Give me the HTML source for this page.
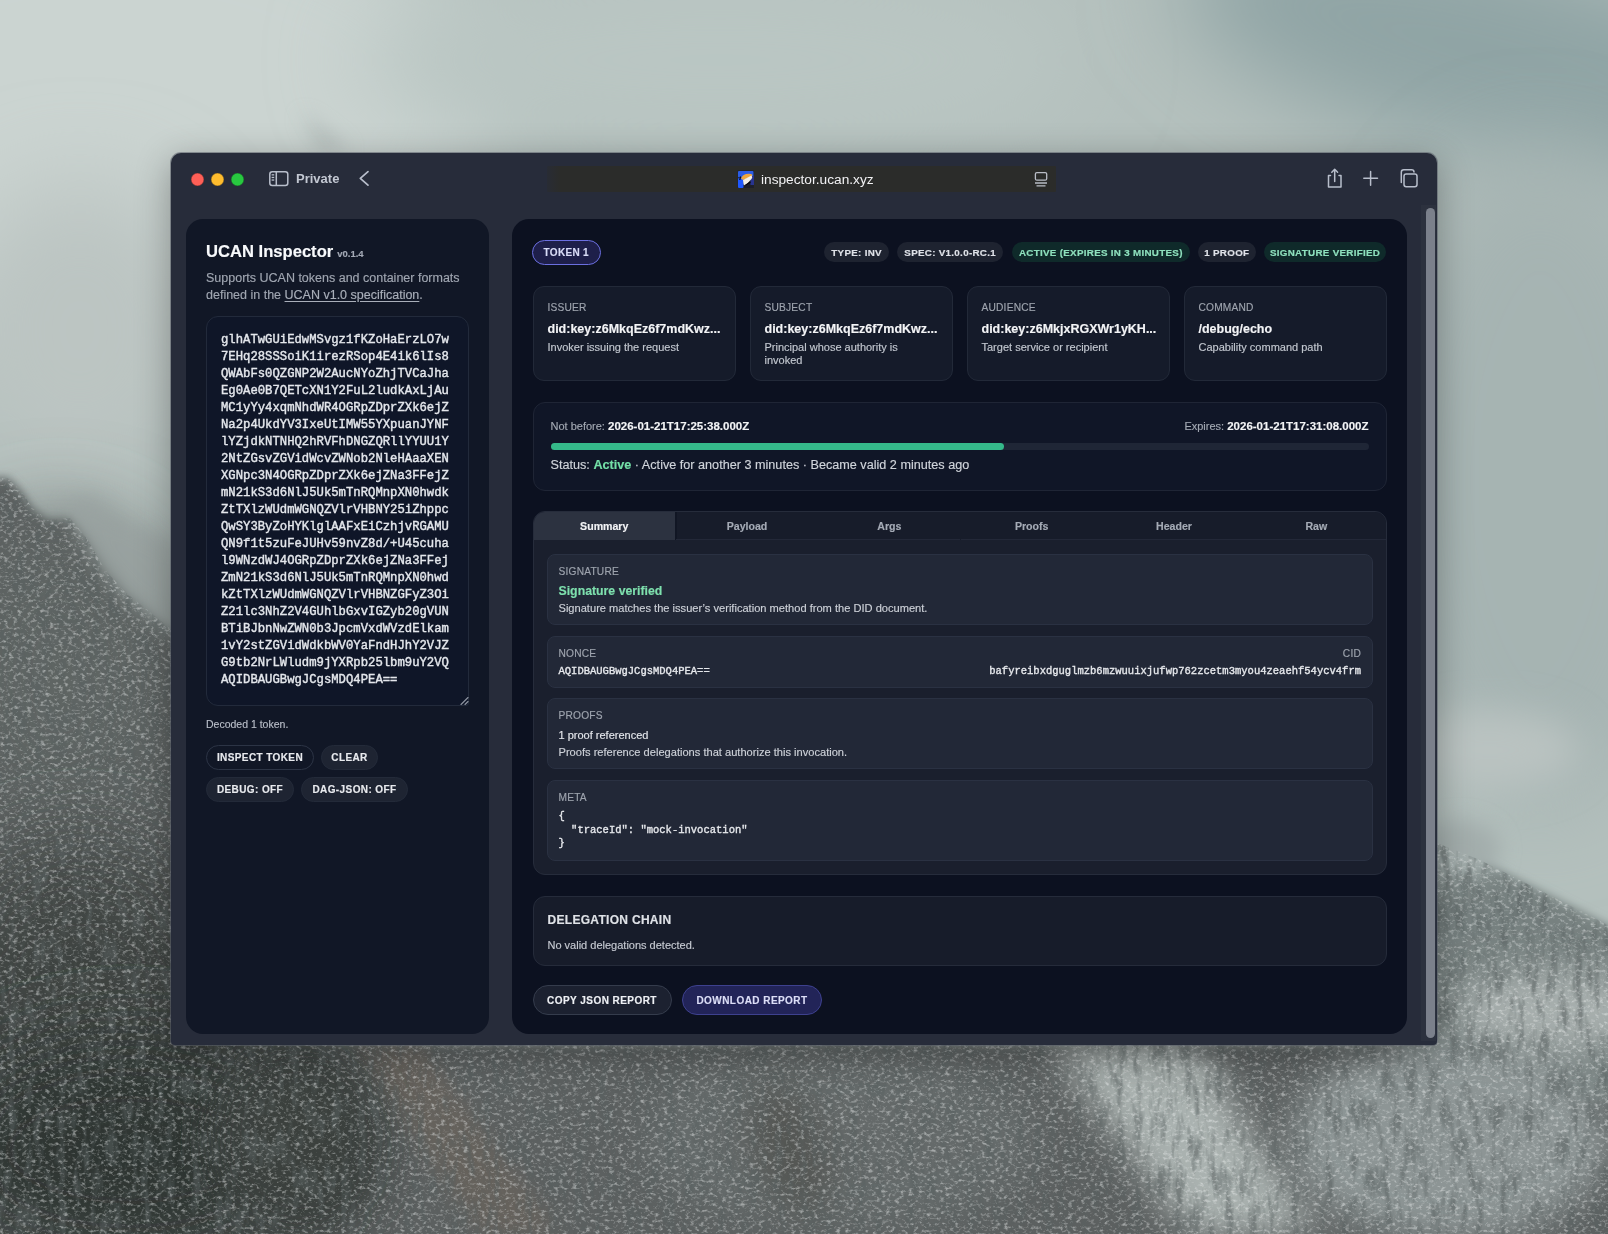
<!DOCTYPE html>
<html><head><meta charset="utf-8">
<style>
*{box-sizing:border-box;margin:0;padding:0}
html,body{width:1608px;height:1234px;overflow:hidden}
body{position:relative;font-family:"Liberation Sans",sans-serif;background:#b9c2c0;color:#e5e7eb}
#lp,#rp{-webkit-text-stroke:.15px currentColor;will-change:transform}
.tt{will-change:transform}
.abs{position:absolute}
#bg{position:absolute;left:0;top:0;width:1608px;height:1234px}
#win{position:absolute;left:171px;top:153px;width:1266px;height:892px;background:#272c3a;border-radius:10px 10px 4px 4px;box-shadow:0 0 0 1px rgba(90,95,105,.55),0 8px 36px rgba(0,0,0,.32)}
.tl{position:absolute;top:172.5px;width:13px;height:13px;border-radius:50%;box-shadow:inset 0 0 0 .6px rgba(0,0,0,.35)}
#url{position:absolute;left:547px;top:165.5px;width:509px;height:26.5px;background:linear-gradient(90deg,rgba(43,44,42,.35),#2b2c2a 13px);border-radius:1px}
.panel{position:absolute;top:219px;height:815px;border-radius:17px}
#lp{left:186px;width:303px;background:#111726}
#rp{left:512px;width:895px;background:#0c1120}
#scroll{position:absolute;left:1421px;top:205px;width:15px;height:836px;background:#2c313e}
#thumb{position:absolute;left:1425.5px;top:208px;width:9px;height:830px;background:#7b808b;border-radius:5px}

.lbl{position:absolute;white-space:nowrap}
#lp .h1{position:absolute;left:20px;top:23px;font-size:16.6px;font-weight:bold;color:#f8fafc;line-height:20px;white-space:nowrap}
#lp .h1 small{font-size:9.5px;color:#a3a9b5;font-weight:bold;margin-left:4px}
#lp .sub{position:absolute;left:20px;top:51px;width:270px;font-size:12.5px;line-height:17px;color:#a0a6b1}
#lp .sub u{text-decoration:underline;text-underline-offset:2px;color:#a9afba}
#ta{position:absolute;left:20px;top:97px;width:263px;height:390px;border:1px solid #222a3b;border-radius:12px 12px 3px 12px;background:#0f1628}
#ta pre{position:absolute;left:14px;top:15px;-webkit-text-stroke:.4px #e4e7ec;font-family:"Liberation Mono",monospace;font-size:12.25px;line-height:17px;color:#e4e7ec}
.btn{position:absolute;height:25px;border-radius:13px;font-size:10px;font-weight:bold;letter-spacing:.4px;color:#e8eaee;line-height:23px;text-align:center;white-space:nowrap}
.b1{border:1px solid #2c3445;background:#111726}
.b2{border:1px solid #232a39;background:#1e2432}

.pill{position:absolute;height:20.5px;border-radius:11px;font-size:9.8px;font-weight:bold;letter-spacing:.3px;line-height:22.5px;text-align:center;white-space:nowrap;top:22.7px}
.pg{background:#1e2330;color:#dfe2e8}
.pgr{background:#0f2a2a;color:#8ee0bd}
#tok{position:absolute;left:20px;top:21px;width:68.5px;height:25px;border:1.5px solid #6b6fe0;border-radius:13px;background:#1e1f4a;color:#d9dcf7;font-size:10px;font-weight:bold;letter-spacing:.3px;line-height:23.5px;text-align:center}
.card{position:absolute;top:66.5px;width:203px;height:95.4px;border:1px solid #222938;border-radius:11px;background:#151b2a}
.card .k{position:absolute;left:13.5px;top:14px;font-size:10.2px;letter-spacing:.2px;color:#9ea4ae;line-height:13px}
.card .v{position:absolute;left:13.5px;top:34px;font-size:12.5px;font-weight:bold;color:#f3f4f6;line-height:16px;white-space:nowrap}
.card .d{position:absolute;left:13.5px;top:54px;width:150px;font-size:11px;color:#c3c8d0;line-height:13px}
#val{position:absolute;left:20.5px;top:182.5px;width:854px;height:89.7px;border:1px solid #1f2535;border-radius:12px;background:#101627}
#tabs{position:absolute;left:20.5px;top:292.4px;width:854px;height:363.4px;border:1px solid #262c3b;border-radius:12px;background:#1a1f2d;overflow:hidden}
.tab{position:absolute;top:0;width:142.33px;height:27.5px;font-size:10.6px;font-weight:bold;color:#a5abb6;text-align:center;line-height:29px;box-shadow:inset 0 -1px 0 #232838}
.sec{position:absolute;left:13.5px;width:825.5px;border:1px solid #2a3142;border-radius:8px;background:#222837}
.sec .k{position:absolute;left:10.5px;top:10.3px;font-size:10.2px;letter-spacing:.2px;color:#9ea4ae;line-height:13px}
#del{position:absolute;left:20.5px;top:677.4px;width:854px;height:69.3px;border:1px solid #252b3a;border-radius:12px;background:#171c2a}
.rbtn{position:absolute;top:766px;height:30px;border-radius:15px;font-size:10px;font-weight:bold;letter-spacing:.45px;line-height:29.5px;text-align:center;color:#eef0f4}
.mono{font-family:"Liberation Mono",monospace;-webkit-text-stroke:.35px currentColor}
</style></head><body>
<svg id="bg" width="1608" height="1234" viewBox="0 0 1608 1234">
<defs>
<filter id="b1" x="-50%" y="-50%" width="200%" height="200%"><feGaussianBlur stdDeviation="18"/></filter>
<filter id="b2" x="-50%" y="-50%" width="200%" height="200%"><feGaussianBlur stdDeviation="45"/></filter>
<filter id="b3" x="-10%" y="-10%" width="120%" height="120%"><feGaussianBlur stdDeviation="5"/></filter>
<filter id="b4" x="-50%" y="-50%" width="200%" height="200%"><feGaussianBlur stdDeviation="10"/></filter>
<filter id="tex" x="0" y="0" width="1608" height="1234" filterUnits="userSpaceOnUse">
<feTurbulence type="fractalNoise" baseFrequency="0.22 0.3" numOctaves="3" seed="7"/>
<feColorMatrix type="matrix" values="0 0 0 0 0.88  0 0 0 0 0.9  0 0 0 0 0.9  3.2 0 0 0 -1.62"/>
</filter>
<filter id="texd" x="0" y="0" width="1608" height="1234" filterUnits="userSpaceOnUse">
<feTurbulence type="fractalNoise" baseFrequency="0.12 0.03" numOctaves="3" seed="11"/>
<feColorMatrix type="matrix" values="0 0 0 0 0.1  0 0 0 0 0.12  0 0 0 0 0.12  3.2 0 0 0 -1.45"/>
</filter>
<clipPath id="forest"><path d="M0 478 L8 478 L22 492 L32 508 L48 520 L70 518 L88 540 L105 570 L125 592 L150 612 L172 630 L172 1234 L0 1234Z M0 1044 H1608 V1234 H0Z M1437 843 L1480 860 L1608 925 V1044 H1437Z"/></clipPath>
</defs>
<rect width="1608" height="1234" fill="#b4c0bd"/>
<ellipse cx="120" cy="110" rx="380" ry="230" fill="#cbd4d1" filter="url(#b2)"/>
<ellipse cx="720" cy="60" rx="360" ry="100" fill="#bac6c3" filter="url(#b2)"/>
<ellipse cx="1500" cy="55" rx="330" ry="105" fill="#90a4a5" filter="url(#b2)" transform="rotate(14 1500 55)"/>
<ellipse cx="1540" cy="480" rx="170" ry="330" fill="#a6b4b2" filter="url(#b2)"/>
<ellipse cx="1490" cy="750" rx="90" ry="40" fill="#bac3c1" filter="url(#b1)"/>
<ellipse cx="80" cy="330" rx="130" ry="150" fill="#bcc5c2" filter="url(#b2)"/>
<path d="M300 112 L350 150 L320 150Z" fill="#9fa9a7" filter="url(#b4)" opacity=".6"/>
<g filter="url(#b3)">
<path d="M-60 478 L8 478 L22 492 L32 508 L48 520 L70 518 L88 540 L105 570 L125 592 L150 612 L172 630 L240 660 L240 1300 L-60 1300Z" fill="#5b6160"/>
<path d="M-60 1044 L1668 1044 L1668 1300 L-60 1300Z" fill="#5b6160"/>
<path d="M1400 840 L1480 860 L1608 925 L1680 950 L1680 1100 L1400 1100Z" fill="#778180"/>
</g>
<ellipse cx="60" cy="680" rx="120" ry="160" fill="#5f6564" filter="url(#b2)"/>
<ellipse cx="80" cy="1000" rx="150" ry="160" fill="#404543" filter="url(#b2)"/>
<ellipse cx="130" cy="1150" rx="200" ry="120" fill="#2f3432" filter="url(#b2)"/>
<path d="M350 1044 L420 1044 L560 1234 L480 1234Z" fill="#6a645c" filter="url(#b4)" opacity=".7"/>
<ellipse cx="300" cy="1140" rx="90" ry="100" fill="#3b3f3c" filter="url(#b1)"/>
<ellipse cx="840" cy="1140" rx="200" ry="90" fill="#656b6a" filter="url(#b1)"/>
<ellipse cx="790" cy="1150" rx="35" ry="70" fill="#4a4844" filter="url(#b1)" opacity=".6" transform="rotate(-20 790 1150)"/>
<path d="M1050 1044 L1190 1044 L1320 1234 L1190 1234Z" fill="#aab2b0" filter="url(#b1)"/>
<ellipse cx="1450" cy="1140" rx="160" ry="100" fill="#8d9595" filter="url(#b1)"/>
<path d="M1120 1044 L1240 1080 L1150 1100Z" fill="#a3aaa8" filter="url(#b4)"/>
<path d="M62 505 L92 495 L118 520 L148 532 L175 548 L175 640 L150 615 L125 595 L100 565 L80 530Z" fill="#9aa3a1" filter="url(#b4)" opacity=".9"/>
<ellipse cx="1560" cy="1010" rx="110" ry="40" fill="#a7afad" filter="url(#b1)"/>
<ellipse cx="1460" cy="850" rx="40" ry="30" fill="#a3adac" filter="url(#b4)"/>
<g clip-path="url(#forest)">
<rect width="1608" height="1234" filter="url(#texd)" opacity=".55"/>
<rect width="1608" height="1234" filter="url(#tex)" opacity=".45"/>
</g>
</svg>
<div id="win"></div>
<div class="tl" style="left:190.5px;background:#fe5f57"></div>
<div class="tl" style="left:210.5px;background:#febc2e"></div>
<div class="tl" style="left:230.5px;background:#28c840"></div>
<div id="url"></div>

<svg class="abs" style="left:0;top:0" width="1608" height="220" viewBox="0 0 1608 220">
<g fill="none" stroke="#b8becb" stroke-width="1.5" stroke-linecap="round" stroke-linejoin="round">
<rect x="269.8" y="171.8" width="18" height="13.6" rx="2.5"/>
<line x1="276.3" y1="172" x2="276.3" y2="185.2"/>
<path d="M368 171.6 L360.3 178.4 L368 185.2" stroke-width="1.7"/>
<path d="M1330.5 175.5 H1328.5 V187 H1341 V175.5 H1339"/>
<path d="M1334.7 181.5 V169.5 M1331.8 172.3 L1334.7 169.3 L1337.6 172.3"/>
<path d="M1370.6 171.5 V185.2 M1363.8 178.3 H1377.5"/>
<rect x="1404" y="174" width="13" height="12.8" rx="2.2"/>
<path d="M1401.3 182.5 V172.3 Q1401.3 169.8 1403.8 169.8 H1411.5 Q1414 169.8 1414 172"/>
</g>
<g fill="#b8becb"><rect x="271.6" y="174.2" width="2.6" height="1.3"/><rect x="271.6" y="176.8" width="2.6" height="1.3"/><rect x="271.6" y="179.4" width="2.6" height="1.3"/></g>
<g>
<rect x="737.8" y="170.5" width="16" height="17.5" fill="#1d1f2a"/>
<rect x="738" y="171" width="15.5" height="6.5" rx="1" fill="#2b5de8"/>
<rect x="738" y="178" width="5.5" height="10" rx="1" fill="#1f58ff"/>
<rect x="750.5" y="176" width="3.5" height="9" fill="#28348f"/>
<path d="M741 178.5 Q742 175 746 174 Q751 173 752.5 175 L751 177 Q747 178.5 743 180Z" fill="#eea53c"/>
<path d="M743 180 L751.5 175.5 Q753 177 751.5 179 L745.5 185.5 Q744 186 743.5 184Z" fill="#f3efe6"/>
<path d="M740.5 176.5 L739.8 180 M744.5 185.8 L750.5 182" stroke="#05060c" stroke-width="1.2"/>
</g>
<g fill="none" stroke="#b9bdc6" stroke-width="1.3">
<rect x="1035.4" y="172.6" width="11.3" height="7.6" rx="1.5"/>
<path d="M1035 183 H1047 M1036.5 185.8 H1045.5"/>
</g>
</svg>
<div class="abs tt" style="left:295.8px;top:171px;font-size:13px;font-weight:bold;color:#c3c8d2;line-height:16px">Private</div>
<div class="abs tt" style="left:761px;top:171.5px;font-size:13.7px;color:#f2f2f4;line-height:16px;letter-spacing:0">inspector.ucan.xyz</div>
<div id="lp" class="panel">
<div class="h1">UCAN Inspector<small>v0.1.4</small></div>
<div class="sub">Supports UCAN tokens and container formats defined in the <u>UCAN v1.0 specification</u>.</div>
<div id="ta"><pre>glhATwGUiEdwMSvgz1fKZoHaErzLO7w
7EHq28SSSoiK1irezRSop4E4ik6lIs8
QWAbFs0QZGNP2W2AucNYoZhjTVCaJha
Eg0Ae0B7QETcXN1Y2FuL2ludkAxLjAu
MC1yYy4xqmNhdWR4OGRpZDprZXk6ejZ
Na2p4UkdYV3IxeUtIMW55YXpuanJYNF
lYZjdkNTNHQ2hRVFhDNGZQRllYYUU1Y
2NtZGsvZGVidWcvZWNob2NleHAaaXEN
XGNpc3N4OGRpZDprZXk6ejZNa3FFejZ
mN21kS3d6NlJ5Uk5mTnRQMnpXN0hwdk
ZtTXlzWUdmWGNQZVlrVHBNY25iZhppc
QwSY3ByZoHYKlglAAFxEiCzhjvRGAMU
QN9f1t5zuFeJUHv59nvZ8d/+U45cuha
l9WNzdWJ4OGRpZDprZXk6ejZNa3FFej
ZmN21kS3d6NlJ5Uk5mTnRQMnpXN0hwd
kZtTXlzWUdmWGNQZVlrVHBNZGFyZ3Oi
Z21lc3NhZ2V4GUhlbGxvIGZyb20gVUN
BTiBJbnNwZWN0b3JpcmVxdWVzdElkam
1vY2stZGVidWdkbWV0YaFndHJhY2VJZ
G9tb2NrLWludm9jYXRpb25lbm9uY2VQ
AQIDBAUGBwgJCgsMDQ4PEA==</pre>
<svg class="abs" style="left:252px;top:378px" width="10" height="10"><path d="M2 9.5 L9 2.5 M6 9.5 L9 6.5" stroke="#8e94a0" stroke-width="1.1" stroke-linecap="round"/></svg>
</div>
<div class="lbl" style="left:20px;top:499px;font-size:10.5px;color:#b9bec8;line-height:13px">Decoded 1 token.</div>
<div class="btn b1" style="left:20px;top:526px;width:108px">INSPECT TOKEN</div>
<div class="btn b2" style="left:135px;top:526px;width:57px">CLEAR</div>
<div class="btn b2" style="left:20px;top:558px;width:88px">DEBUG: OFF</div>
<div class="btn b2" style="left:115px;top:558px;width:107px">DAG-JSON: OFF</div>
</div>
<div id="rp" class="panel">
<div id="tok">TOKEN 1</div>
<div class="pill pg" style="left:311.9px;width:65.5px">TYPE: INV</div>
<div class="pill pg" style="left:385.4px;width:105.5px">SPEC: V1.0.0-RC.1</div>
<div class="pill pgr" style="left:499.6px;width:178.5px">ACTIVE (EXPIRES IN 3 MINUTES)</div>
<div class="pill pg" style="left:685.6px;width:58.4px">1 PROOF</div>
<div class="pill pgr" style="left:751.9px;width:122.4px">SIGNATURE VERIFIED</div>
<div class="card" style="left:21px"><div class="k">ISSUER</div><div class="v">did:key:z6MkqEz6f7mdKwz...</div><div class="d">Invoker issuing the request</div></div>
<div class="card" style="left:238px"><div class="k">SUBJECT</div><div class="v">did:key:z6MkqEz6f7mdKwz...</div><div class="d">Principal whose authority is invoked</div></div>
<div class="card" style="left:455px"><div class="k">AUDIENCE</div><div class="v">did:key:z6MkjxRGXWr1yKH...</div><div class="d">Target service or recipient</div></div>
<div class="card" style="left:672px"><div class="k">COMMAND</div><div class="v">/debug/echo</div><div class="d">Capability command path</div></div>
<div id="val">
<div class="lbl" style="left:17px;top:16px;font-size:11px;color:#a3a9b3;line-height:14px">Not before: <b style="font-size:11.5px;color:#f3f4f6">2026-01-21T17:25:38.000Z</b></div>
<div class="lbl" style="right:17px;top:16px;font-size:11px;color:#a3a9b3;line-height:14px">Expires: <b style="font-size:11.5px;color:#f3f4f6">2026-01-21T17:31:08.000Z</b></div>
<div class="abs" style="left:17px;top:40px;width:818px;height:7.5px;border-radius:4px;background:#1f2636"></div>
<div class="abs" style="left:17px;top:40px;width:453px;height:7.5px;border-radius:4px;background:#35b98a"></div>
<div class="lbl" style="left:17px;top:54.5px;font-size:12.65px;color:#d0d4db;line-height:16px">Status: <span style="color:#74e0a8;font-weight:bold">Active</span> · Active for another 3 minutes · Became valid 2 minutes ago</div>
</div>
<div id="tabs">
<div class="abs" style="left:0;top:0;width:854px;height:27.5px;background:#171c2a"></div>
<div class="tab" style="left:0;width:141.5px;background:#2c3240;color:#f3f4f6;box-shadow:none">Summary</div><div class="abs" style="left:141.5px;top:0;width:1.5px;height:27.5px;background:#111624"></div>
<div class="tab" style="left:142.33px">Payload</div>
<div class="tab" style="left:284.67px">Args</div>
<div class="tab" style="left:427px">Proofs</div>
<div class="tab" style="left:569.33px">Header</div>
<div class="tab" style="left:711.67px">Raw</div>
<div class="sec" style="top:41.4px;height:71.6px"><div class="k">SIGNATURE</div>
<div class="lbl" style="left:10.5px;top:28px;font-size:12.3px;font-weight:bold;color:#7ee0ae;line-height:16px">Signature verified</div>
<div class="lbl" style="left:10.5px;top:46px;font-size:11.1px;color:#cdd1d8;line-height:14px">Signature matches the issuer’s verification method from the DID document.</div></div>
<div class="sec" style="top:123.8px;height:51.5px"><div class="k">NONCE</div>
<div class="lbl mono" style="left:10.5px;top:28px;font-size:10.5px;color:#e6e8ec;line-height:13px">AQIDBAUGBwgJCgsMDQ4PEA==</div>
<div class="lbl" style="right:10.5px;top:10.3px;font-size:10.2px;letter-spacing:.2px;color:#9ea4ae;line-height:13px">CID</div>
<div class="lbl mono" style="right:10.5px;top:28px;font-size:10.5px;color:#e6e8ec;line-height:13px">bafyreibxdguglmzb6mzwuuixjufwp762zcetm3myou4zeaehf54ycv4frm</div></div>
<div class="sec" style="top:185.8px;height:70.8px"><div class="k">PROOFS</div>
<div class="lbl" style="left:10.5px;top:29px;font-size:11px;color:#e3e6eb;line-height:14px">1 proof referenced</div>
<div class="lbl" style="left:10.5px;top:46px;font-size:11.1px;color:#cdd1d8;line-height:14px">Proofs reference delegations that authorize this invocation.</div></div>
<div class="sec" style="top:267.6px;height:81px"><div class="k">META</div>
<pre class="lbl mono" style="white-space:pre;left:10.5px;top:29.5px;font-size:10.5px;color:#e6e8ec;line-height:13.4px">{
  "traceId": "mock-invocation"
}</pre></div>
</div>
<div id="del">
<div class="lbl" style="left:14px;top:15px;font-size:12px;font-weight:bold;letter-spacing:.3px;color:#dfe2e7;line-height:16px">DELEGATION CHAIN</div>
<div class="lbl" style="left:14px;top:41px;font-size:11px;color:#c6cad2;line-height:14px">No valid delegations detected.</div>
</div>
<div class="rbtn" style="left:20.5px;width:139px;border:1px solid #353c4c;background:#1c2130">COPY JSON REPORT</div>
<div class="rbtn" style="left:170px;width:140px;border:1px solid #3e418f;background:#222458;color:#dcdef7">DOWNLOAD REPORT</div>
</div>
<div id="scroll"></div><div id="thumb"></div>
</body></html>
